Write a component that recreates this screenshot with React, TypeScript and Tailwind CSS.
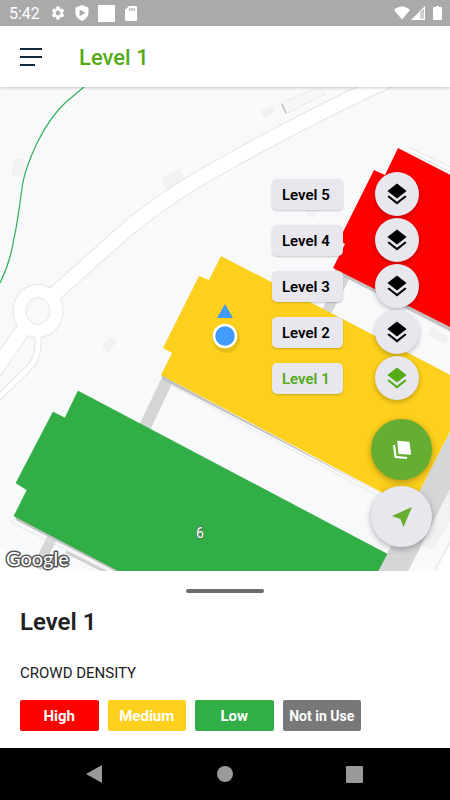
import { useState } from 'react';
import { MdSettings } from 'react-icons/md';

const levels = [5, 4, 3, 2, 1];

const densities = [
  { name: 'High', className: 'bg-[#ff0000] text-[15px]' },
  { name: 'Medium', className: 'bg-[#fcd01c] text-[15px]' },
  { name: 'Low', className: 'bg-[#32ae46] text-[15px]' },
  { name: 'Not in Use', className: 'bg-[#787878] text-[14px]' },
];

const StatusBar = () => (
  <div className="flex h-[26px] shrink-0 items-center justify-between bg-[#aaaaaa] pr-2 pl-[9px] text-white">
    <div className="flex items-center">
      <span className="w-[41px] pt-px text-[16px] leading-[26px]">5:42</span>
      <MdSettings className="h-4 w-4" />
      {/* Play Protect shield */}
      <svg viewBox="0 0 16 18" className="ml-2 h-4 w-4">
        <path d="M8 0l7.300 2.700v5.800c0 4.500-3 7.700-7.300 9.500C3.700 16.200.7 13 .7 8.500V2.700z" fill="#fff" />
        <path d="M5.300 5v7.600L12 8.800z" fill="#aaa" />
      </svg>
      <span className="ml-2 h-[17px] w-[17px] bg-white" />
      {/* SD card */}
      <svg viewBox="0 0 12 15" className="ml-[10px] h-[15px] w-3">
        <path d="M4 0h7a1 1 0 011 1v13a1 1 0 01-1 1H1a1 1 0 01-1-1V4z" fill="#fff" />
        <path d="M4.700 2v3M7 2v3M9.300 2v3" stroke="#aaa" strokeWidth="1.200" />
      </svg>
    </div>
    <div className="flex items-center">
      <svg viewBox="0 0 16 14" className="h-[14px] w-4">
        <path d="M0 4C4.500-.8 11.500-.8 16 4L8 13.500z" fill="#fff" />
      </svg>
      <svg viewBox="0 0 14 14" className="ml-px h-[14px] w-[14px]">
        <path d="M14 0v14H0z" fill="#fff" />
        <path d="M9.500 6.200L12.700 3v9.500H9.500z" fill="#aaa" />
        <path d="M11.200 6v6" stroke="#fff" strokeWidth="1" />
      </svg>
      <svg viewBox="0 0 9 14" className="ml-2 h-[14px] w-[9px]">
        <path d="M3 0h3v1h2a1 1 0 011 1v11a1 1 0 01-1 1H1a1 1 0 01-1-1V2a1 1 0 011-1h2z" fill="#fff" />
      </svg>
    </div>
  </div>
);

const Header = ({ title }: { title: string }) => (
  <header className="relative z-10 flex h-[61px] shrink-0 items-center bg-white pl-5 shadow-[0_1px_3px_rgba(0,0,0,0.2)]">
    <button aria-label="Menu" className="flex w-[59px] flex-col gap-[6px]">
      <span className="h-[2px] w-[22px] bg-[#14283c]" />
      <span className="h-[2px] w-[22px] bg-[#14283c]" />
      <span className="h-[2px] w-[15px] bg-[#14283c]" />
    </button>
    <h1 className="pt-[2px] text-[22px] leading-7 font-medium text-[#54ab16]">{title}</h1>
  </header>
);

const LayersIcon = () => (
  <svg viewBox="0 0 20 22" className="h-[22px] w-5" fill="currentColor">
    <path d="M10 0.500L19.600 8L10 15.500L0.400 8z" />
    <path d="M0.400 13.800L2 12.600L10 18.800L18 12.600L19.600 13.800L10 21.400z" />
  </svg>
);

const roads = [
  'M50 298L115 240C150 208 190 183 225 164C275 136 325 110 374 87L400 75',
  'M30 322L20 334L0 363L-10 378',
];
const slipRoad = 'M38 334V346C38 357 32 365 27 370L-4 400';

const FloorMap = () => (
  <svg
    viewBox="0 87 450 492"
    preserveAspectRatio="xMidYMin slice"
    className="absolute inset-0 h-full w-full"
    role="img"
    aria-label="Map"
  >
    <rect x="0" y="0" width="450" height="800" fill="#f8f9fb" />

    {/* Small buildings */}
    <g fill="#f1f2f4" stroke="#e9eaec" strokeWidth="0.500">
      <path d="M14 159l10 1-1 16-11-1z" />
      <path d="M162 179l17-9 5 10-16 11z" />
      <path d="M111 337l6 4-9 11-6-5z" />
      <path d="M261 111l10-5 3 5-9 6z" />
      <path d="M306 213l5-5 8 1-6 9z" />
      <path d="M432 328l16 9-3 6-17-8z" />
    </g>

    {/* Roads and roundabout */}
    <g fill="none" stroke="#e4e5e7">
      {roads.map((d) => (
        <path key={d} d={d} strokeWidth="16" />
      ))}
      <path d={slipRoad} strokeWidth="7" />
      <ellipse cx="38" cy="311" rx="18" ry="19.500" strokeWidth="15" />
    </g>
    <g fill="none" stroke="#fff">
      {roads.map((d) => (
        <path key={d} d={d} strokeWidth="14" />
      ))}
      <path d={slipRoad} strokeWidth="5" />
      <ellipse cx="38" cy="311" rx="18" ry="19.500" strokeWidth="13" />
    </g>
    <ellipse cx="38" cy="311" rx="12" ry="13.500" fill="#f8f9fb" stroke="#e4e5e7" />

    {/* Raised building by the road */}
    <path d="M281 103L320 87L325 94L286 114z" fill="#f6f7f7" stroke="#e4e5e5" strokeWidth="0.800" />
    <path d="M282 104l4 9" stroke="#c0c0c0" strokeWidth="1.500" />

    <path
      d="M84 87L66 102C54 113 43 131 37 143C30 158 25 172 23 182C20 200 18 222 14 238C11 258 6 271 0 283"
      fill="none"
      stroke="#2fae58"
      strokeWidth="1.200"
    />

    {/* Walkways between the blocks */}
    <g stroke="#d5d6d7" fill="none">
      <path d="M348 271L325 315" strokeWidth="10" />
      <path d="M170 374L143 431" strokeWidth="12" />
      <path d="M56 530L30 582" strokeWidth="10" />
    </g>
    <path d="M470 393V450L400 587H370z" fill="#d5d6d7" />
    <path d="M450 490L422 545L433 549L450 519z" fill="#f1f2f3" stroke="#e9eaeb" strokeWidth="0.500" />
    <path d="M450 543L436 568L444 586H460z" fill="#fff" stroke="#ececec" strokeWidth="2" />
    <path d="M0 548L60 580H0z" fill="#fff" />
    <path d="M14 519L12 523L140 586M56 541L140 583" fill="none" stroke="#e6e6e6" />
    <path d="M66 552L110 574" stroke="#cfcfcf" strokeWidth="3" />

    {/* Low density block */}
    <path d="M16 518L125 574" stroke="#c2c2c4" strokeWidth="4" />
    <path d="M78 391L387 554L368 590H155L14 516L27 490L16 483L53 412L65 418z" fill="#32ae46" stroke="#18a02a" strokeWidth="0.500" />

    {/* Medium density block */}
    <path d="M172 386L382 498" stroke="#e8e8e8" strokeWidth="1" />
    <path d="M161 375L163 380L290 446L382 494z" fill="#c2c2c4" />
    <path d="M221 256L460 380V412L411 508L161 375L172 353L163 348L199 276L209 280z" fill="#fcd01c" />

    {/* High density block */}
    <path d="M410 150L460 174" stroke="#e6e6e6" strokeWidth="5" />
    <path d="M410 150L460 174" stroke="#fff" strokeWidth="3" />
    <path d="M335 270L460 334" stroke="#c2c2c4" strokeWidth="4" />
    <path d="M398 148L460 180V332L333 268L345 244L339 240L374 170L385 175z" fill="#ff0000" />

    <text x="200" y="538" textAnchor="middle" fontSize="14" fontFamily="Roboto, sans-serif" fill="#fff" stroke="#4f7f58" strokeWidth="2" paintOrder="stroke">
      6
    </text>
    <text x="6" y="566" fontSize="20" fontFamily="Lato, sans-serif" fill="#fff" stroke="#555" strokeWidth="3" strokeLinejoin="round" paintOrder="stroke">
      Google
    </text>

    {/* Current position */}
    <circle cx="226" cy="339" r="14" fill="#000" opacity="0.080" />
    <path d="M225 304L233 318H217z" fill="#3f9bff" />
    <circle cx="225" cy="336" r="11" fill="#3f9bff" stroke="#fff" strokeWidth="2.500" />
  </svg>
);

const BottomSheet = ({ title }: { title: string }) => (
  <section className="relative z-10 -mt-2 shrink-0 rounded-t-[10px] bg-white px-5 pt-[18px] pb-[17px]">
    <div className="mx-auto h-1 w-[78px] rounded-full bg-[#6d6d6d]" />
    <h2 className="mt-3 pt-px text-[24px] leading-8 font-semibold text-[#212121]">{title}</h2>
    <h3 className="mt-[23px] text-[15px] leading-6 text-[#212121]">CROWD DENSITY</h3>
    <ul className="mt-[15px] grid max-w-[341px] grid-cols-4 gap-[9px]">
      {densities.map((density) => (
        <li
          key={density.name}
          className={`h-[31px] rounded-[2px] text-center leading-[32px] font-bold whitespace-nowrap text-white ${density.className}`}
        >
          {density.name}
        </li>
      ))}
    </ul>
  </section>
);

const SystemNav = () => (
  <nav className="flex h-[52px] shrink-0 items-center justify-between bg-black px-[85px] text-[#999999]">
    <button aria-label="Back">
      <svg viewBox="0 0 18 18" className="h-[18px] w-[18px]">
        <path d="M17 0v18L1 9z" fill="currentColor" />
      </svg>
    </button>
    <button aria-label="Home" className="h-4 w-4 rounded-full bg-[#999999]" />
    <button aria-label="Recent apps" className="mr-[2px] h-[17px] w-[17px] rounded-[1px] bg-[#999999]" />
  </nav>
);

const App = () => {
  const [level, setLevel] = useState(1);
  const title = `Level ${level}`;

  return (
    <div className="flex min-h-screen flex-col bg-white font-[Roboto,sans-serif]">
      <StatusBar />
      <Header title={title} />

      <main className="relative min-h-[480px] flex-1 overflow-hidden">
        <FloorMap />

        {/* Floating controls */}
        <div className="absolute top-[85px] right-[18px] flex flex-col items-end">
          <div className="mr-[13px] flex flex-col gap-[2px]">
            {levels.map((n) => (
              <button
                key={n}
                onClick={() => setLevel(n)}
                className={`flex items-center gap-8 ${n === level ? 'text-[#54ab16]' : 'text-black'}`}
              >
                <span className="h-[31px] w-[71px] rounded-[5px] bg-[#e8e7ee] pl-[10px] text-left text-[15px] leading-[32px] font-semibold shadow-[0_1px_2px_rgba(0,0,0,0.2)]">
                  Level {n}
                </span>
                <span className="flex h-11 w-11 items-center justify-center rounded-full bg-[#e8e7ee] shadow-[0_2px_5px_rgba(0,0,0,0.25)]">
                  <LayersIcon />
                </span>
              </button>
            ))}
          </div>
          <button
            aria-label="Choose level"
            className="mt-[19px] flex h-[61px] w-[61px] items-center justify-center rounded-full bg-[#66ae32] shadow-[0_2px_6px_rgba(0,0,0,0.3)]"
          >
            <svg viewBox="0 0 20 20" className="h-5 w-5" fill="#fff">
              <path d="M5.200 0.800L16.800 1.700Q17.400 1.800 17.500 2.400L19.200 14.800L7.300 13.900Q6.500 13.800 6.400 13.200z" />
              <path d="M1 5H3L4.700 16L15 16.900V19L3.400 18Q2.500 17.900 2.400 17z" />
            </svg>
          </button>
          <button
            aria-label="My location"
            className="mt-[6px] flex h-[61px] w-[61px] items-center justify-center rounded-full bg-[#e8e7ee] shadow-[0_2px_6px_rgba(0,0,0,0.3)]"
          >
            <svg viewBox="0 0 20 20" className="h-5 w-5" fill="#66ae32">
              <path d="M20 0L11.500 20L8.300 12L0 9z" />
            </svg>
          </button>
        </div>
      </main>

      <BottomSheet title={title} />
      <SystemNav />
    </div>
  );
};

export default App;
